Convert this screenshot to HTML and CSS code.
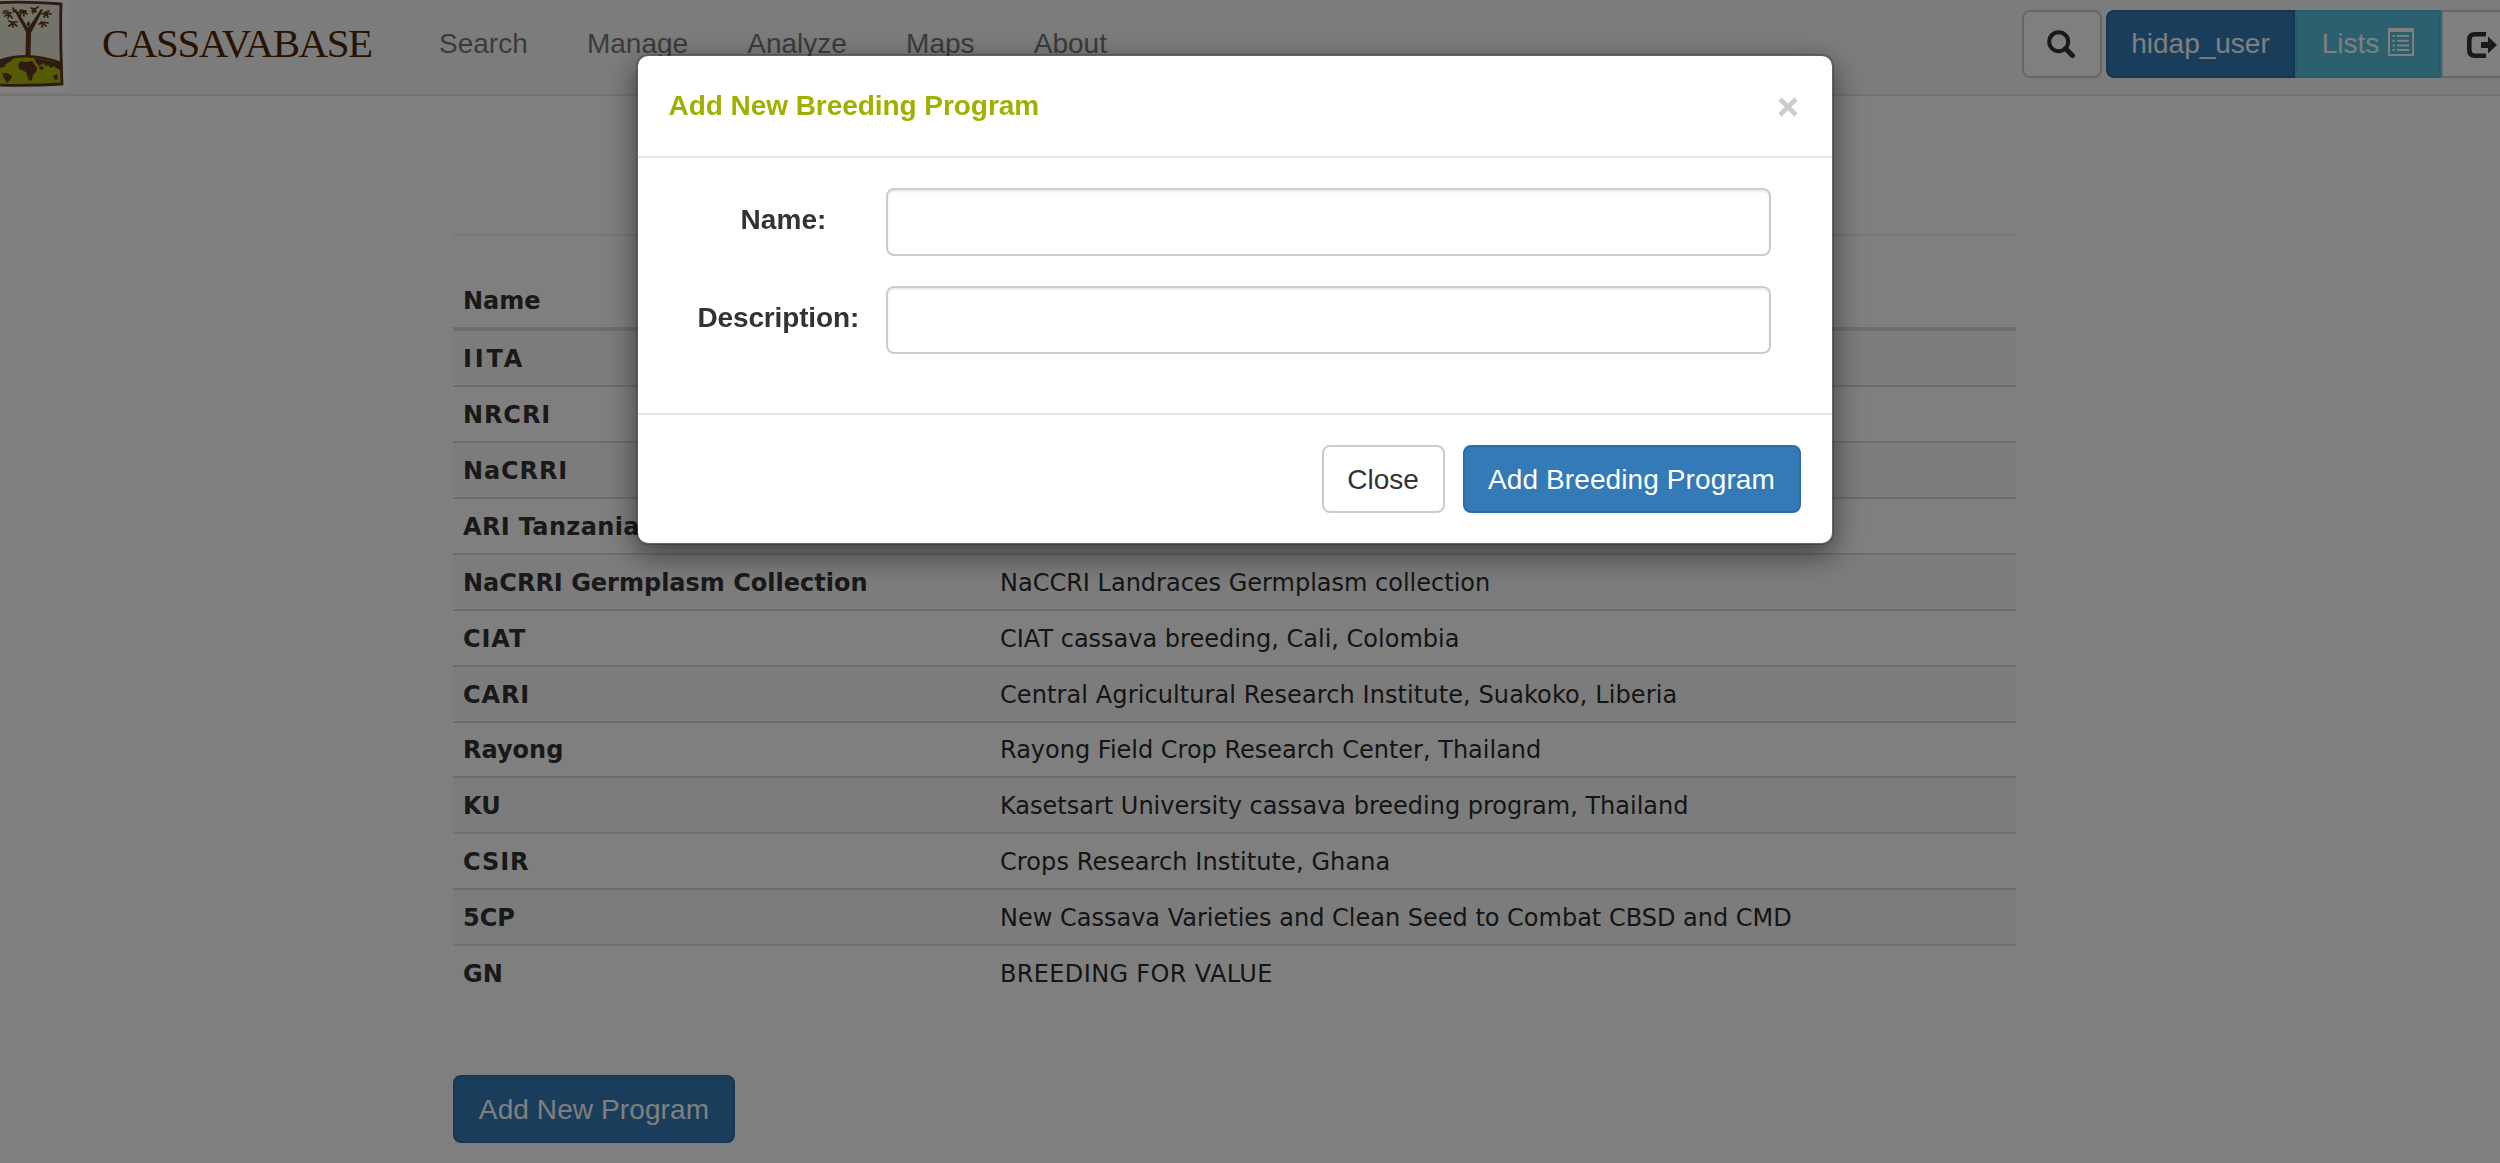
FILE: index.html
```html
<!DOCTYPE html>
<html lang="en">
<head>
<meta charset="utf-8">
<title>Cassavabase - Breeding Programs</title>
<link rel="stylesheet" href="styles.css">
</head>
<body>
<nav class="navbar">
  <svg class="logo" viewBox="0 0 68 91" aria-hidden="true">
    <rect width="68" height="91" fill="#fff"/>
    <path d="M-4 3 Q20 1 61 4 Q60 30 62 84 Q30 86 -4 85Z" fill="#e6e7d2"/>
    <path d="M-4 62 Q26 50 61 63 L62 84 L-4 84Z" fill="#adb60c"/>
    <path d="M-4 62 Q26 50 61 63" fill="none" stroke="#5e371e" stroke-width="2.600"/>
    <g fill="#5e371e">
      <path d="M0 61 L14 58 L11 61 L6 64 L4 67 L0 68Z"/>
      <path d="M18 65 L21 61 L25 62 L32 61 L37 68 L36 72 L33 75 L32 80 L29 81 L26 72 L19 69Z"/>
      <path d="M2 73 L7 73 L12 76 L11 79 L7 83 L4 78Z M53 76 L57 74 L58 79 L55 80Z"/>
      <path d="M34 58 L60 63 V70 L56 68 L54 66 L51 68 L48 65 L45 66 L44 63 L39 66 L36 62Z"/>
      <path d="M39 67 L42 66 L44 69 L41 70Z"/>
    </g>
    <path d="M24 60 Q28 62 33 60" fill="none" stroke="#adb60c" stroke-width="1"/>
    <path d="M25.500 57 L26 32 L14 10 L16 9 L27.500 27 L29 27 L41 9 L43 10 L31 33 L30.500 57Z" fill="#5e371e"/>
    <ellipse cx="28.500" cy="24" rx="1.500" ry="2.500" fill="#5e371e"/>
    <g fill="none" stroke="#5e371e" stroke-width="1.700" stroke-linecap="round">
      <path d="M11 13 L3 13 M11 13 L5 16 M10 13 L8 18 M9 13 L12 18 M8 11 L4 11 M13 23 L9 21 M13 23 L9 26 M13 23 L13 27 M13 23 L17 26 M12 22 L17 22 M14 12 L13 8"/>
      <path d="M22 11 L18 13 M22 11 L20 16 M23 11 L24 16 M23 11 L27 14 M20 10 L26 11"/>
      <path d="M35 9 L31 8 M35 9 L33 13 M35 9 L36 12 M35 9 L38 7 M35 9 L32 11"/>
      <path d="M46 13 L42 14 M46 13 L44 17 M46 13 L48 17 M46 13 L51 14 M44 13 L49 11"/>
      <path d="M43 23 L39 24 M43 23 L42 27 M43 23 L46 26 M41 22 L48 23"/>
    </g>
    <path d="M-4 3 Q20 1 61 4 Q60 30 62 84 Q30 86 -4 85" fill="none" stroke="#5e371e" stroke-width="2.800"/>
  </svg>
  <span class="brand">CASSAVABASE</span>
  <div class="menu">
    <a>Search</a><a>Manage</a><a>Analyze</a><a>Maps</a><a>About</a>
  </div>
  <div class="tools">
    <button class="btn btn-search" aria-label="Search">
      <svg class="ico-search" viewBox="0 0 29 29"><circle cx="11.700" cy="11.700" r="9.500" fill="none" stroke="#333" stroke-width="4"/><path d="M18.500 18.500 L25.500 25.500" stroke="#333" stroke-width="5" stroke-linecap="round"/></svg>
    </button>
    <div class="group">
      <button class="btn btn-primary btn-user">hidap_user</button>
      <button class="btn btn-info">Lists
        <svg class="ico-list" viewBox="0 0 26 28"><path fill="#fff" fill-rule="evenodd" d="M0 0H26V28H0Z M2 4V26H24V4Z"/><path fill="#fff" d="M4.500 7h2.500v2h-2.500z M9 7h12v2H9z M4.500 11.700h2.500v2h-2.500z M9 11.700h12v2H9z M4.500 16.400h2.500v2h-2.500z M9 16.400h12v2H9z M4.500 21h2.500v2h-2.500z M9 21h12v2H9z"/></svg>
      </button>
      <button class="btn btn-logout" aria-label="Log out">
        <svg class="ico-out" viewBox="0 0 30 26"><path d="M19 2.300 H8 Q2.300 2.300 2.300 8 V18 Q2.300 23.700 8 23.700 H19" fill="none" stroke="#333" stroke-width="4.600"/><path d="M14 10 H21 V4.500 L30 13 L21 21.500 V16 H14Z" fill="#333"/></svg>
      </button>
    </div>
  </div>
</nav>

<main class="content">
  <hr class="rule">
  <div class="table">
    <div class="row head"><span>Name</span></div>
    <div class="row"><b class="iita">IITA</b></div>
    <div class="row"><b class="caps">NRCRI</b></div>
    <div class="row"><b class="caps">NaCRRI</b></div>
    <div class="row"><b class="loose">ARI Tanzania</b></div>
    <div class="row"><b>NaCRRI Germplasm Collection</b><span>NaCCRI Landraces Germplasm collection</span></div>
    <div class="row"><b class="caps">CIAT</b><span>CIAT cassava breeding, Cali, Colombia</span></div>
    <div class="row"><b class="caps">CARI</b><span class="long">Central Agricultural Research Institute, Suakoko, Liberia</span></div>
    <div class="row"><b>Rayong</b><span>Rayong Field Crop Research Center, Thailand</span></div>
    <div class="row"><b>KU</b><span>Kasetsart University cassava breeding program, Thailand</span></div>
    <div class="row"><b class="caps">CSIR</b><span class="long">Crops Research Institute, Ghana</span></div>
    <div class="row"><b>5CP</b><span>New Cassava Varieties and Clean Seed to Combat CBSD and CMD</span></div>
    <div class="row"><b>GN</b><span class="wide">BREEDING FOR VALUE</span></div>
  </div>
  <button class="btn btn-primary btn-new">Add New Program</button>
</main>

<div class="backdrop">
  <section class="modal" role="dialog" aria-labelledby="modal-title">
    <header class="modal-header">
      <h4 id="modal-title">Add New Breeding Program</h4>
      <svg class="ico-close" viewBox="0 0 20 20" role="img" aria-label="Close"><path d="M2 2 L18 18 M18 2 L2 18" stroke="#ccc" stroke-width="4.600"/></svg>
    </header>
    <form class="modal-body">
      <label for="name">Name:</label><input id="name" type="text">
      <label for="desc">Description:</label><input id="desc" type="text">
    </form>
    <footer class="modal-footer">
      <button class="btn btn-close">Close</button>
      <button class="btn btn-primary btn-add">Add Breeding Program</button>
    </footer>
  </section>
</div>
</body>
</html>
```

FILE: styles.css
```css
* { box-sizing: border-box; }

body {
  margin: 0;
  height: 1163px;
  overflow: hidden;
  background: #fff;
  color: #333;
  font-family: "Liberation Sans", Arial, sans-serif;
  font-size: 28px;
}

/* Top navigation */
.navbar {
  display: flex;
  height: 96px;
  background: #f8f8f8;
  border-bottom: 2px solid #e7e7e7;
  overflow: hidden;
}
.logo { flex: none; width: 68px; height: 91px; }
.brand {
  width: 335px;
  padding-left: 34px;
  flex: none;
  font-family: "Liberation Serif", "Times New Roman", serif;
  font-size: 41px;
  line-height: 47px;
  padding-top: 20px;
  letter-spacing: -1.45px;
  color: #502400;
}
.menu {
  display: flex;
  gap: 59.2px;
  padding-left: 36px;
  line-height: 32px;
  padding-top: 28px;
  color: #777;
}
.tools {
  display: flex;
  flex: none;
  gap: 4px;
  margin-left: auto;
  margin-right: -42px;
  padding-top: 10px;
}
.group { display: flex; }

/* Buttons */
.btn {
  display: flex;
  align-items: center;
  justify-content: center;
  flex: none;
  height: 68px;
  padding: 0;
  border: 2px solid #ccc;
  border-radius: 8px;
  background: #fff;
  color: #333;
  font: 28px "Liberation Sans", Arial, sans-serif;
}
.btn-primary { background: #337ab7; border-color: #2e6da4; color: #fff; }
.btn-info {
  width: 146px;
  gap: 9px;
  background: #5bc0de;
  border-color: #46b8da;
  border-radius: 0;
  color: #fff;
}
.btn-search { width: 80px; }
.btn-user { width: 189px; border-radius: 8px 0 0 8px; }
.btn-logout { width: 101px; justify-content: flex-start; padding-left: 24px; border-radius: 0 8px 8px 0; }
.btn-new { width: 282px; margin-top: 75px; padding-top: 2px; letter-spacing: 0.1px; }
.btn-close { width: 123px; padding-top: 2px; }
.btn-add { width: 338px; padding-top: 2px; letter-spacing: 0.1px; }
.ico-search { width: 29px; height: 29px; margin-right: 1px; }
.ico-list { width: 26px; height: 28px; margin-top: -4px; }
.ico-out { width: 30px; height: 26px; margin-top: 1px; }

/* Breeding program list */
.content { width: 1563px; margin-left: 453px; padding-top: 138px; }
.rule { margin: 0 0 39px; border: 0; border-top: 2px solid #eee; }
.table {
  font-family: "DejaVu Sans", Verdana, sans-serif;
  font-size: 24px;
}
.row {
  display: grid;
  grid-template-columns: 537px 1fr;
  align-items: center;
  height: 55.9px;
  padding: 2px 0 0 10px;
  border-top: 2px solid #ddd;
  line-height: 28px;
  white-space: nowrap;
}
.row:nth-child(even) { background: #f9f9f9; }
.row span { color: #2a2a2a; }
.row .long { letter-spacing: 0.1px; }
.row .wide { letter-spacing: 0.35px; }
.row .caps { letter-spacing: 0.9px; }
.row .loose { letter-spacing: 0.35px; }
.row .iita { letter-spacing: 2.8px; }
.row.head { height: 54.3px; padding-top: 0; border-top: 0; border-bottom: 2px solid #ddd; font-weight: bold; }
.row.head span { color: #333; }

/* Dialog */
.backdrop {
  position: fixed;
  inset: 0;
  padding-top: 54px;
  background: rgba(0, 0, 0, 0.5);
}
.modal {
  width: 1198px;
  margin-left: 635.5px;
  background: #fff;
  background-clip: padding-box;
  border: 2px solid rgba(0, 0, 0, 0.2);
  border-radius: 12px;
  box-shadow: 0 10px 30px rgba(0, 0, 0, 0.5);
}
.modal-header {
  display: flex;
  justify-content: space-between;
  height: 102px;
  padding: 34px 34px 0 31px;
  border-bottom: 2px solid #e5e5e5;
}
.modal-header h4 { margin: 0; font-size: 28px; line-height: 32px; letter-spacing: -0.05px; color: #a0b000; }
.ico-close { width: 20px; height: 20px; margin-top: 7px; }
.modal-body {
  display: grid;
  grid-template-columns: 160px 885px;
  column-gap: 28px;
  row-gap: 30px;
  height: 255px;
  margin: 0;
  padding: 30px 0 0 60px;
  align-content: start;
}
.modal-body label {
  height: 68px;
  padding: 16px 0;
  font-weight: bold;
  line-height: 32px;
  letter-spacing: -0.15px;
  text-align: center;
  white-space: nowrap;
}
.modal-body label:first-of-type { width: 150px; margin-left: 11px; letter-spacing: 0.1px; }
.modal-body input {
  height: 68px;
  width: 100%;
  border: 2px solid #ccc;
  border-radius: 8px;
  box-shadow: inset 0 2px 2px rgba(0, 0, 0, 0.075);
}
.modal-footer {
  display: flex;
  justify-content: flex-end;
  gap: 18px;
  height: 130px;
  padding: 30px 31px 0 0;
  border-top: 2px solid #e5e5e5;
}
```
